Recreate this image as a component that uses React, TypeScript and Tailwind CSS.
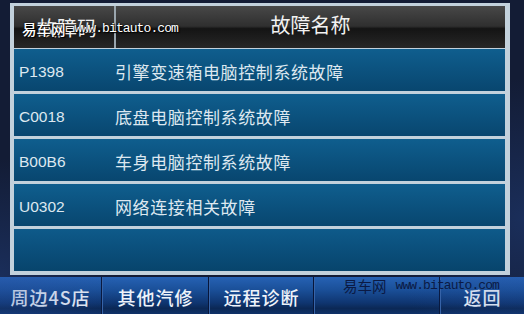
import React from 'react';

const faults = [
  { code: 'P1398', name: '引擎变速箱电脑控制系统故障' },
  { code: 'C0018', name: '底盘电脑控制系统故障' },
  { code: 'B00B6', name: '车身电脑控制系统故障' },
  { code: 'U0302', name: '网络连接相关故障' },
];

const cjk = '"Noto Sans CJK SC", "Noto Sans", sans-serif';

function Separator() {
  return <div className="h-full w-[2px] shrink-0 bg-[linear-gradient(to_right,#07163a_50%,#3764a8_50%)]" />;
}

function BarButton({ label, width }: { label: string; width: string }) {
  return (
    <div className={`${width} flex h-full items-center justify-center pt-[4px] text-[18px] font-medium tracking-[1px] text-[#eef3fa]`}>
      {label}
    </div>
  );
}

export default function App() {
  return (
    <div
      className="relative flex h-[314px] w-[524px] flex-col overflow-hidden bg-[#131c35]"
      style={{ fontFamily: cjk }}
    >
      {/* soft glow in the background */}
      <div className="pointer-events-none absolute inset-0 bg-[radial-gradient(circle_at_100%_70%,rgba(40,80,160,0.35),transparent_25%),radial-gradient(circle_at_0%_88%,rgba(40,80,160,0.35),transparent_20%)]" />

      {/* Table frame */}
      <div className="relative ml-[10px] mt-[3px] flex h-[272px] w-[500px] flex-col bg-[#c2d1dc] pb-[4px] pl-[4px] pr-[5px] pt-[3px]">
        {/* Header */}
        <div className="flex h-[42px] shrink-0 bg-[linear-gradient(to_bottom,#484848_0%,#2f2f2f_48%,#141414_54%,#272727_100%)]">
          <div className="flex w-[100px] items-center justify-center pl-[6px] pt-[2px] text-[20px] text-[#f2f2f2]">故障码</div>
          <div className="w-[2px] bg-[#9aa6ae]" />
          <div className="flex flex-1 items-center justify-center pb-[4px] text-[20px] text-[#f2f2f2]">故障名称</div>
        </div>

        <div className="mt-[1px] flex flex-1 flex-col gap-[3px]">
          {faults.map((f) => (
            <div
              key={f.code}
              className="flex h-[42px] shrink-0 items-center bg-[linear-gradient(to_bottom,#0f5e8e,#08466f)] pt-[3px] text-[#dde8f0]"
            >
              <div className="w-[101px] pl-[5px] text-[15.5px]" style={{ fontFamily: '"Liberation Sans", Arial, sans-serif' }}>
                {f.code}
              </div>
              <div className="text-[17px] tracking-[0.6px]">{f.name}</div>
            </div>
          ))}
          <div className="flex-1 bg-[linear-gradient(to_bottom,#0e5a8a,#07446c)]" />
        </div>
      </div>

      {/* Bottom bar */}
      <div className="mt-[2px] flex h-[37px] items-stretch bg-[linear-gradient(to_bottom,#2662b4_0%,#1a4f98_35%,#0f3570_70%,#0b2855_85%,#0f3169_100%)]">
        <BarButton label="周边4S店" width="w-[101px]" />
        <Separator />
        <BarButton label="其他汽修" width="w-[105px]" />
        <Separator />
        <BarButton label="远程诊断" width="w-[103px]" />
        <Separator />
        <div className="w-[124px]" />
        <Separator />
        <BarButton label="返回" width="flex-1" />
      </div>

      {/* watermarks */}
      <div className="absolute left-[22px] top-[18px] flex items-center text-white [text-shadow:0_0_2px_#000,1px_1px_1px_#000]">
        <span className="text-[14.5px] font-medium">易车网</span>
        <span className="ml-[9px] text-[13px] tracking-[-0.9px]" style={{ fontFamily: '"Liberation Mono", monospace' }}>
          www.bitauto.com
        </span>
      </div>
      <div className="absolute left-[343px] top-[275px] flex items-center text-[#0b1a44]">
        <span className="text-[14.5px]">易车网</span>
        <span className="ml-[9px] text-[13px] tracking-[-0.9px]" style={{ fontFamily: '"Liberation Mono", monospace' }}>
          www.bitauto.com
        </span>
      </div>
    </div>
  );
}
